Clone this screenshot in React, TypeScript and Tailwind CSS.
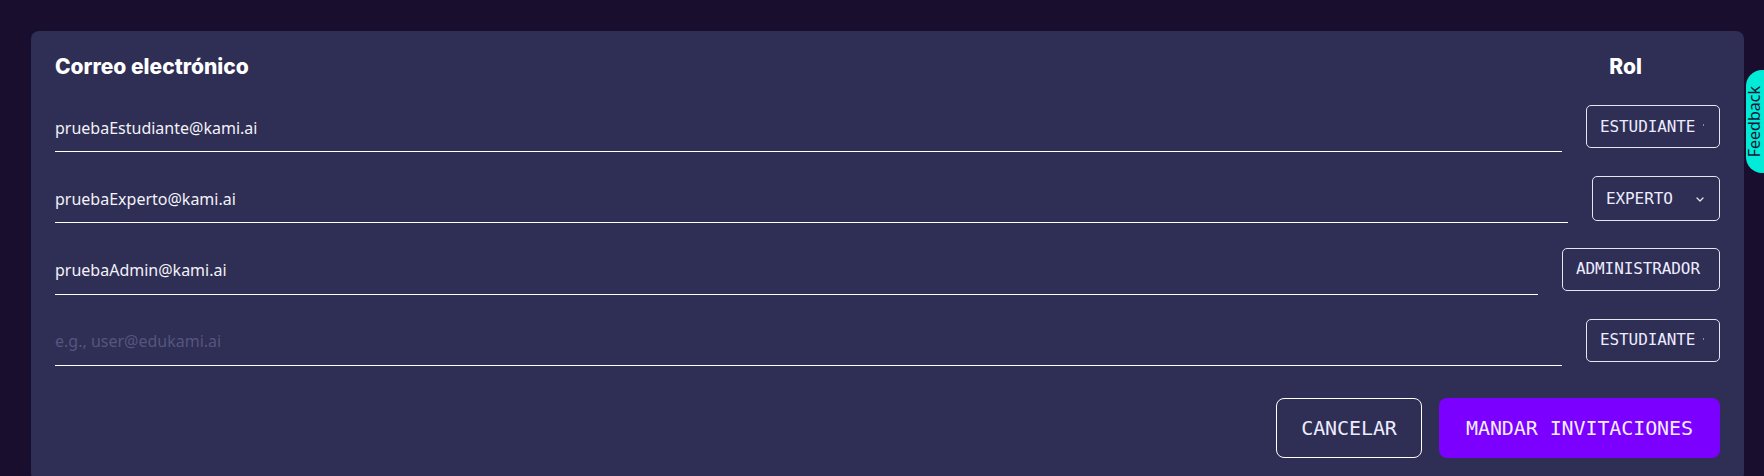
import React from "react";

type Row = {
  email: string;
  role: string;
  width: string;
  height: string;
  chevron?: boolean;
  tick?: boolean;
};

const ROWS: Row[] = [
  { email: "pruebaEstudiante@kami.ai", role: "ESTUDIANTE", width: "w-[134px]", height: "h-[43px] mb-[4px]", tick: true },
  { email: "pruebaExperto@kami.ai", role: "EXPERTO", width: "w-[128px]", height: "h-[45px] mb-[2px]", chevron: true },
  { email: "pruebaAdmin@kami.ai", role: "ADMINISTRADOR", width: "w-[158px]", height: "h-[43px] mb-[4px]" },
  { email: "", role: "ESTUDIANTE", width: "w-[134px]", height: "h-[43px] mb-[4px]", tick: true },
];

const MONO = "font-['DejaVu_Sans_Mono','Liberation_Mono',monospace]";

function RoleSelect({ row }: { row: Row }) {
  return (
    <div
      className={`${row.width} ${row.height} shrink-0 flex items-center overflow-hidden whitespace-nowrap rounded-[5px] border border-[#e6e6f2] pl-[13px] ${MONO} text-[16px] tracking-[-0.1px] text-[#ececff]`}
    >
      <span>{row.role}</span>
      {row.chevron && (
        <svg width="8" height="5" viewBox="0 0 8 5" className="ml-[23px] mt-[1px]" aria-hidden>
          <polyline points="1,1 4,4 7,1" fill="none" stroke="#e6e6f2" strokeWidth="1.3" strokeLinecap="round" strokeLinejoin="round" />
        </svg>
      )}
      {row.tick && <span className="ml-[8px] mb-[3px] block w-[1px] h-[2px] bg-[#8a8aa8]" />}
    </div>
  );
}

export default function App() {
  return (
    <div className="min-h-screen w-full bg-[#1a0e2e] pt-[31px] pl-[31px] pr-[20px] relative overflow-hidden">
      <div className="rounded-lg bg-[#2f2e54] pt-[22px] pl-[24px] pr-[24px] pb-6">
        {/* header */}
        <div className="flex items-center justify-between h-[28px] font-['Inter',sans-serif] font-extrabold text-[21px] leading-[28px] text-white">
          <span>Correo electrónico</span>
          <span className="mr-[78px]">Rol</span>
        </div>

        {/* rows */}
        <div className="mt-[23px] flex flex-col gap-[23.3px]">
          {ROWS.map((row, i) => (
            <div key={i} className="flex items-end gap-6">
              <input
                readOnly
                value={row.email}
                placeholder="e.g., user@edukami.ai"
                className="flex-1 min-w-0 h-[48px] bg-transparent border-b border-white outline-none font-['Noto_Sans',sans-serif] text-[16px] text-[#f2f2f8] placeholder:text-[#555580]"
              />
              <RoleSelect row={row} />
            </div>
          ))}
        </div>

        {/* actions */}
        <div className={`mt-[32px] flex justify-end gap-[17px] ${MONO}`}>
          <button className="w-[146px] h-[60px] rounded-lg border border-white text-[20px] tracking-[-0.1px] text-[#ececff]">
            CANCELAR
          </button>
          <button className="w-[281px] h-[60px] rounded-lg bg-[#7b00ff] text-[20px] tracking-[-0.1px] text-[#f4ecff]">
            MANDAR INVITACIONES
          </button>
        </div>
      </div>

      {/* feedback tab */}
      <div className="absolute top-[70px] right-0 w-[18px] h-[103px] rounded-l-[16px] bg-[#00ecd8] flex items-center">
        <span className="[writing-mode:vertical-rl] rotate-180 font-['Noto_Sans',sans-serif] text-[16px] leading-[16px] text-[#1c1433]">
          Feedback
        </span>
      </div>
    </div>
  );
}
